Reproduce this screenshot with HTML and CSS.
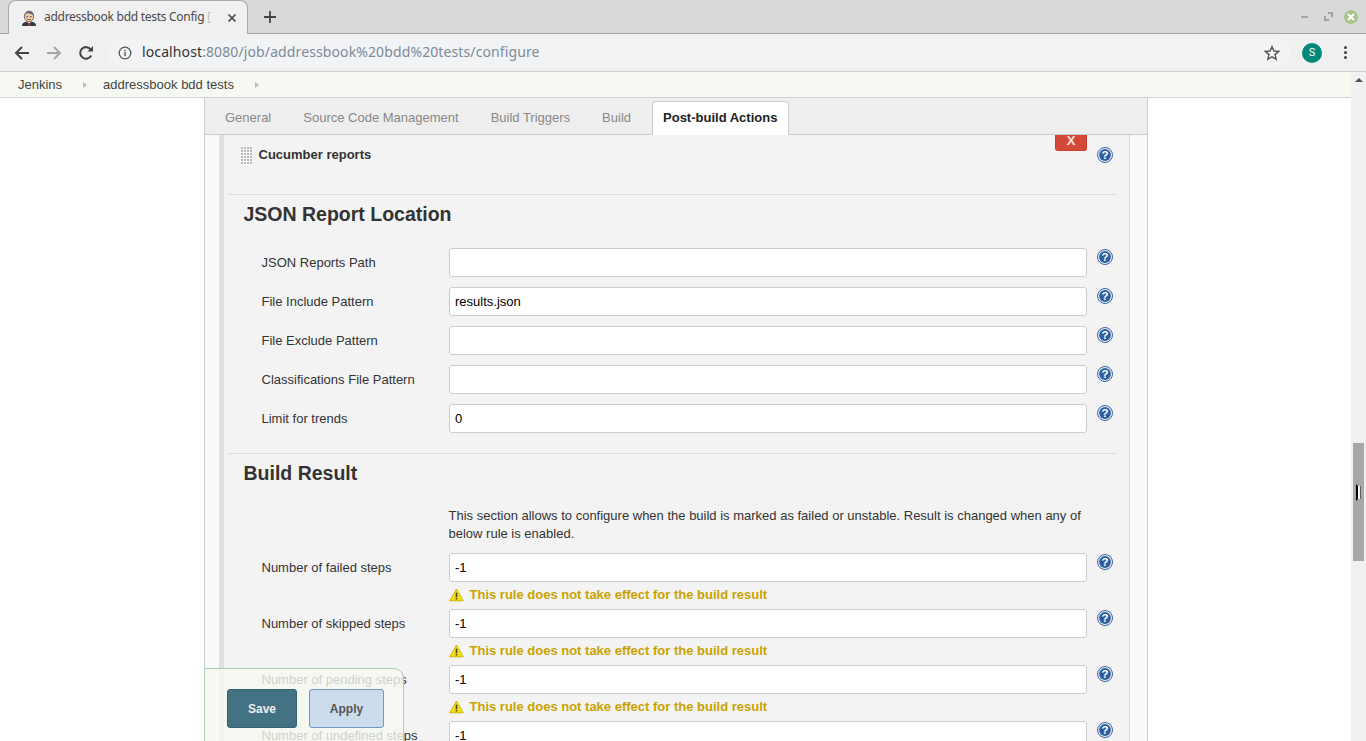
FILE: index.html
```html
<!DOCTYPE html>
<html lang="en">
<head>
    <meta charset="UTF-8">
    <title>addressbook bdd tests Config [Jenkins]</title>
    <link rel="stylesheet" href="styles.css">
</head>
<body>
<svg class="svg-defs" width="0" height="0">
    <defs>
        <symbol id="help" viewBox="0 0 16 16">
            <circle cx="8" cy="8" r="7.5" fill="#e8eef6" stroke="#3a66a3" stroke-width="1"/>
            <circle cx="8" cy="8" r="5.9" fill="#2f5f9e"/>
            <text x="8" y="12" class="help-mark" text-anchor="middle">?</text>
        </symbol>
        <symbol id="warn" viewBox="0 0 15 14">
            <path d="M7.5 1 L14.2 12.8 H0.8 Z" fill="#f7de12" stroke="#d2b40c" stroke-width="1" stroke-linejoin="round"/>
            <rect x="6.7" y="4.6" width="1.6" height="4.6" fill="#4a4430"/>
            <rect x="6.7" y="9.9" width="1.6" height="1.6" fill="#4a4430"/>
        </symbol>
    </defs>
</svg>

<div class="window">
    <div class="tabstrip">
        <div class="tab">
            <svg class="favicon" width="16" height="16" viewBox="0 0 16 16">
                <path d="M1 16 C1 12.5 4 11.5 8 11.5 C12 11.5 15 12.5 15 16 Z" fill="#2f3b4a"/>
                <path d="M6.8 11.5 L7 15.5 H9 L9.2 11.5 Z" fill="#c0392b"/>
                <path d="M5.5 11 H10.5 L9 13 H7 Z" fill="#f2f2f2"/>
                <ellipse cx="8" cy="6.5" rx="4.6" ry="5.4" fill="#eccdaa" stroke="#5b4a3f" stroke-width="0.8"/>
                <path d="M3.2 7 C2.6 1 13 -1 12.8 6 C11 3.2 6 2.4 4.4 4.2 Z" fill="#5d6066"/>
                <path d="M6 9.2 C7 10 9 10 10 9.2" fill="none" stroke="#8a4a3a" stroke-width="0.9"/>
                <rect x="5.6" y="6" width="1.2" height="1.2" fill="#33302c"/>
                <rect x="9.2" y="6" width="1.2" height="1.2" fill="#33302c"/>
            </svg>
            <span class="tab-title">addressbook bdd tests Config <span class="tab-fade">[</span></span>
            <svg class="tab-close" width="10" height="10" viewBox="0 0 10 10">
                <path d="M1.5 1.5 L8.5 8.5 M8.5 1.5 L1.5 8.5" stroke="#444" stroke-width="1.6"/>
            </svg>
        </div>
        <svg class="new-tab" width="14" height="14" viewBox="0 0 14 14">
            <path d="M7 1 V13 M1 7 H13" stroke="#444" stroke-width="1.8"/>
        </svg>
        <div class="window-buttons">
            <span class="win-min"></span>
            <svg width="9" height="9" viewBox="0 0 9 9">
                <path d="M4 0 H9 V5 L7 5 V2 H4 Z M0 4 H2 V7 H5 V9 H0 Z" fill="#a3a3a3"/>
            </svg>
            <span class="win-close">
                <svg width="8" height="8" viewBox="0 0 8 8">
                    <path d="M1 1 L7 7 M7 1 L1 7" stroke="#fff" stroke-width="2"/>
                </svg>
            </span>
        </div>
    </div>

    <div class="toolbar">
        <svg class="nav-icon" width="16" height="16" viewBox="0 0 16 16">
            <path d="M15 8 H2.5 M8 2 L2 8 L8 14" fill="none" stroke="#444" stroke-width="2"/>
        </svg>
        <svg class="nav-icon" width="16" height="16" viewBox="0 0 16 16">
            <path d="M1 8 H13.5 M8 2 L14 8 L8 14" fill="none" stroke="#a6a6a6" stroke-width="2"/>
        </svg>
        <svg class="nav-icon" width="16" height="16" viewBox="0 0 16 16">
            <path d="M13.2 10.5 A5.8 5.8 0 1 1 13 5" fill="none" stroke="#444" stroke-width="2"/>
            <path d="M9.5 6.5 H15 V1 Z" fill="#444"/>
        </svg>
        <div class="omnibox">
            <svg width="14" height="14" viewBox="0 0 14 14">
                <circle cx="7" cy="7" r="5.8" fill="none" stroke="#555" stroke-width="1.3"/>
                <rect x="6.3" y="6" width="1.4" height="4" fill="#555"/>
                <rect x="6.3" y="3.8" width="1.4" height="1.4" fill="#555"/>
            </svg>
            <span class="url"><span class="url-host">localhost</span>:8080/job/addressbook%20bdd%20tests/configure</span>
            <svg class="star" width="16" height="16" viewBox="0 0 16 16">
                <path d="M8 1.6 L9.9 6 L14.7 6.4 L11 9.6 L12.2 14.3 L8 11.8 L3.8 14.3 L5 9.6 L1.3 6.4 L6.1 6 Z" fill="none" stroke="#555" stroke-width="1.4"/>
            </svg>
        </div>
        <span class="avatar">S</span>
        <span class="menu-dots"><i></i><i></i><i></i></span>
    </div>

    <div class="viewport">
        <div class="page">
            <div class="breadcrumbs">
                <span class="crumb">Jenkins</span>
                <span class="crumb-arrow"></span>
                <span class="crumb">addressbook bdd tests</span>
                <span class="crumb-arrow"></span>
            </div>

            <div class="config">
                <div class="tabbar">
                    <span class="config-tab">General</span>
                    <span class="config-tab">Source Code Management</span>
                    <span class="config-tab">Build Triggers</span>
                    <span class="config-tab">Build</span>
                    <span class="config-tab active">Post-build Actions</span>
                </div>

                <div class="section-wrap">
                    <div class="panel">
                        <div class="panel-head">
                            <span class="grip"></span>
                            <b class="panel-title">Cucumber reports</b>
                            <span class="delete-btn">X</span>
                            <svg class="help"><use href="#help"/></svg>
                        </div>

                        <h2 class="section-title">JSON Report Location</h2>
                        <div class="rows first">
                            <div class="row"><label>JSON Reports Path</label><input type="text"><svg class="help"><use href="#help"/></svg></div>
                            <div class="row"><label>File Include Pattern</label><input type="text" value="results.json"><svg class="help"><use href="#help"/></svg></div>
                            <div class="row"><label>File Exclude Pattern</label><input type="text"><svg class="help"><use href="#help"/></svg></div>
                            <div class="row"><label>Classifications File Pattern</label><input type="text"><svg class="help"><use href="#help"/></svg></div>
                            <div class="row"><label>Limit for trends</label><input type="text" value="0"><svg class="help"><use href="#help"/></svg></div>
                        </div>

                        <h2 class="section-title second">Build Result</h2>
                        <p class="section-note">This section allows to configure when the build is marked as failed or unstable. Result is changed when any of below rule is enabled.</p>
                        <div class="rows">
                            <div class="row tight"><label>Number of failed steps</label><input type="text" value="-1"><svg class="help"><use href="#help"/></svg></div>
                            <div class="warning"><svg width="15" height="14"><use href="#warn"/></svg>This rule does not take effect for the build result</div>
                            <div class="row tight"><label>Number of skipped steps</label><input type="text" value="-1"><svg class="help"><use href="#help"/></svg></div>
                            <div class="warning"><svg width="15" height="14"><use href="#warn"/></svg>This rule does not take effect for the build result</div>
                            <div class="row tight"><label>Number of pending steps</label><input type="text" value="-1"><svg class="help"><use href="#help"/></svg></div>
                            <div class="warning"><svg width="15" height="14"><use href="#warn"/></svg>This rule does not take effect for the build result</div>
                            <div class="row tight"><label>Number of undefined steps</label><input type="text" value="-1"><svg class="help"><use href="#help"/></svg></div>
                        </div>
                    </div>
                </div>
            </div>

            <div class="bottom-sticker">
                <button class="btn-save">Save</button>
                <button class="btn-apply">Apply</button>
            </div>
        </div>

        <div class="scrollbar">
            <span class="scroll-up"></span>
            <div class="scroll-thumb">
                <svg class="cursor" width="5" height="19" viewBox="0 0 5 19">
                    <path d="M0 1 L2 3 V16 L0 18 Z" fill="#000"/>
                    <path d="M2 3 H4 V16 H2 Z" fill="#fff"/>
                    <path d="M4.4 3 V16" stroke="#333" stroke-width="0.7"/>
                </svg>
            </div>
        </div>
    </div>
</div>
</body>
</html>
```

FILE: styles.css
```css
* {
    box-sizing: border-box;
}
html, body {
    margin: 0;
    height: 100%;
    overflow: hidden;
}
body {
    font-family: "Liberation Sans", Arial, sans-serif;
    font-size: 13px;
    color: #333;
    background: #fff;
}
.svg-defs {
    position: absolute;
}
.help-mark {
    font-family: "Liberation Sans", Arial, sans-serif;
    font-size: 11.5px;
    font-weight: bold;
    fill: #fff;
}
.window {
    display: flex;
    flex-direction: column;
    height: 741px;
}

/* browser chrome */
.tabstrip {
    display: flex;
    align-items: center;
    height: 34px;
    flex: none;
    background: #d9d9d9;
    border-bottom: 1px solid #a3a3a3;
    padding-left: 8px;
}
.tab {
    display: flex;
    align-items: center;
    width: 240px;
    height: 34px;
    margin-top: 1px;
    padding: 0 10px 0 12px;
    background: #f0f0f0;
    border: 1px solid #a9a9a9;
    border-bottom: none;
    border-radius: 8px 8px 0 0;
    font-family: "Noto Sans", sans-serif;
    font-size: 12px;
    letter-spacing: -0.28px;
    color: #4a4a4a;
}
.favicon {
    flex: none;
    margin-right: 7px;
}
.tab-title {
    flex: 1;
    margin-top: -2px;
    white-space: nowrap;
}
.tab-fade {
    color: #c4c4c4;
}
.tab-close {
    flex: none;
}
.new-tab {
    margin-left: 15px;
}
.window-buttons {
    display: flex;
    align-items: center;
    gap: 16px;
    margin-left: auto;
    padding-right: 8px;
}
.win-min {
    width: 7px;
    height: 2px;
    background: #a3a3a3;
}
.win-close {
    display: flex;
    align-items: center;
    justify-content: center;
    width: 14px;
    height: 14px;
    margin-left: -5px;
    border-radius: 50%;
    background: #a9c58d;
}
.toolbar {
    display: flex;
    align-items: center;
    height: 38px;
    flex: none;
    background: #f0f0f0;
    border-bottom: 1px solid #cfcfcf;
    padding-left: 14px;
}
.nav-icon {
    flex: none;
    margin-right: 16px;
}
.omnibox {
    display: flex;
    align-items: center;
    width: 1182px;
    height: 28px;
    margin-left: -2px;
    padding: 0 10px;
    border-radius: 14px;
    background: #f2f3f5;
}
.url {
    margin: -2px 0 0 10px;
    font-family: "Noto Sans", sans-serif;
    font-size: 14px;
    letter-spacing: 0.11px;
    color: #7c8b99;
    white-space: nowrap;
}
.url-host {
    color: #333;
}
.star {
    margin-left: auto;
}
.avatar {
    flex: none;
    width: 20px;
    height: 20px;
    margin-left: 12px;
    border-radius: 50%;
    background: #00897b;
    color: #fff;
    font-family: "Roboto", sans-serif;
    font-size: 11px;
    line-height: 20px;
    text-align: center;
}
.menu-dots {
    display: flex;
    flex-direction: column;
    gap: 2px;
    margin-left: 22px;
}
.menu-dots i {
    width: 3px;
    height: 3px;
    border-radius: 50%;
    background: #444;
}

/* page */
.viewport {
    display: flex;
    flex: 1;
    min-height: 0;
}
.page {
    position: relative;
    flex: 1;
    min-width: 0;
    overflow: hidden;
}
.breadcrumbs {
    display: flex;
    align-items: center;
    height: 26px;
    padding-left: 18px;
    background: #f6f9f2;
    border-bottom: 1px solid #d3d3cf;
    color: #444;
}
.crumb-arrow {
    width: 0;
    height: 0;
    margin: 0 16px 0 21px;
    border-left: 4px solid #bbb;
    border-top: 3px solid transparent;
    border-bottom: 3px solid transparent;
}
.config {
    width: 944px;
    margin-left: 204px;
    border-left: 1px solid #ccc;
    border-right: 1px solid #ccc;
}
.tabbar {
    display: flex;
    align-items: flex-end;
    height: 37px;
    padding: 0 0 0 4px;
    background: #eee;
    border-bottom: 1px solid #ccc;
}
.config-tab {
    height: 36px;
    padding: 0 16px;
    line-height: 40px;
    color: #888;
}
.config-tab.active {
    height: 34px;
    margin-bottom: -1px;
    margin-left: 5px;
    padding: 0 11px 0 10px;
    line-height: 32px;
    background: #fff;
    border: 1px solid #ccc;
    border-bottom: none;
    border-radius: 4px 4px 0 0;
    color: #222;
    font-weight: bold;
}
.section-wrap {
    padding: 0 17px 0 14px;
    background: #f9f9f9;
}
.panel {
    padding: 0 12px 0 4px;
    background: #f3f3f3;
    border-left: 5px solid #e0e0e0;
    border-right: 1px solid #d9d9d9;
}
.panel-head {
    position: relative;
    display: flex;
    align-items: flex-start;
    height: 60px;
    padding: 11px 0 0 12px;
    border-bottom: 1px solid #ddd;
}
.grip {
    width: 12px;
    height: 19px;
    margin-right: 6.5px;
    background-color: #b8b8b8;
    background-image: linear-gradient(to right, #fafafa 1px, transparent 1px), linear-gradient(to bottom, #fafafa 1px, transparent 1px);
    background-size: 3px 3px;
}
.panel-title {
    margin-top: 1px;
    font-size: 13px;
    line-height: 16px;
    color: #333;
}
.delete-btn {
    position: absolute;
    right: 30px;
    top: 0;
    width: 32px;
    height: 16px;
    background: #d24939;
    border: 1px solid #c63f2f;
    border-top: none;
    border-radius: 0 0 3px 3px;
    color: #f7e3de;
    font-size: 13px;
    font-weight: bold;
    line-height: 12px;
    text-align: center;
}
.help {
    position: absolute;
    right: 4px;
    top: 12px;
    width: 16px;
    height: 16px;
}
.section-title {
    margin: 0;
    padding: 7px 0 0 15.5px;
    font-size: 19.5px;
    line-height: 24px;
    color: #333;
}
.section-title.second {
    padding-top: 7px;
    border-top: 1px solid #ddd;
}
.rows {
    padding-top: 22px;
}
.rows.first {
    padding-bottom: 10px;
}
.section-note {
    margin: 22px 24px 0 220.5px;
    line-height: 18px;
    color: #333;
}
.section-note + .rows {
    padding-top: 10px;
}
.row {
    position: relative;
    display: flex;
    align-items: center;
    height: 39px;
    padding: 0 30px 10px 33.5px;
}
.row.tight {
    height: 29px;
    padding-bottom: 0;
}
.row label {
    flex: none;
    width: 187.5px;
    font-size: 13px;
}
.row input {
    flex: 1;
    min-width: 0;
    height: 29px;
    padding: 0 5px;
    background: #fff;
    border: 1px solid #ccc;
    border-radius: 3px;
    color: #000;
    font-family: "Liberation Sans", Arial, sans-serif;
    font-size: 13px;
}
.row .help {
    top: 1px;
}
.warning {
    display: flex;
    align-items: center;
    height: 27px;
    padding: 0 0 2px 221px;
    color: #c9a300;
    font-weight: bold;
}
.warning svg {
    box-sizing: content-box;
    margin-right: 3.5px;
    padding-right: 1px;
    border-right: 1px solid #fbfbfb;
}
.bottom-sticker {
    position: absolute;
    left: 204px;
    bottom: -6px;
    display: flex;
    align-items: flex-start;
    gap: 12px;
    width: 200px;
    height: 79px;
    padding: 20px 0 0 22px;
    background: rgba(245, 248, 240, 0.8);
    border: 1px solid #a9cdb5;
    border-radius: 0 10px 0 0;
}
.btn-save, .btn-apply {
    height: 39px;
    font-family: "Liberation Sans", Arial, sans-serif;
    font-size: 12px;
    font-weight: bold;
    border-radius: 3px;
}
.btn-save {
    width: 70px;
    background: #437284;
    border: 1px solid #37606f;
    color: #eee;
}
.btn-apply {
    width: 75px;
    background: #ccdcec;
    border: 1px solid #6d97c4;
    color: #555;
}

/* scrollbar */
.scrollbar {
    position: relative;
    flex: none;
    width: 15px;
    background: #f1f1f1;
}
.scroll-up {
    position: absolute;
    left: 4px;
    top: 6px;
    width: 0;
    height: 0;
    border-left: 4px solid transparent;
    border-right: 4px solid transparent;
    border-bottom: 4px solid #505050;
}
.scroll-thumb {
    position: absolute;
    left: 2px;
    top: 371px;
    width: 11px;
    height: 118px;
    background: #a8a8a8;
}
.cursor {
    position: absolute;
    left: 3px;
    top: 40px;
}
```
